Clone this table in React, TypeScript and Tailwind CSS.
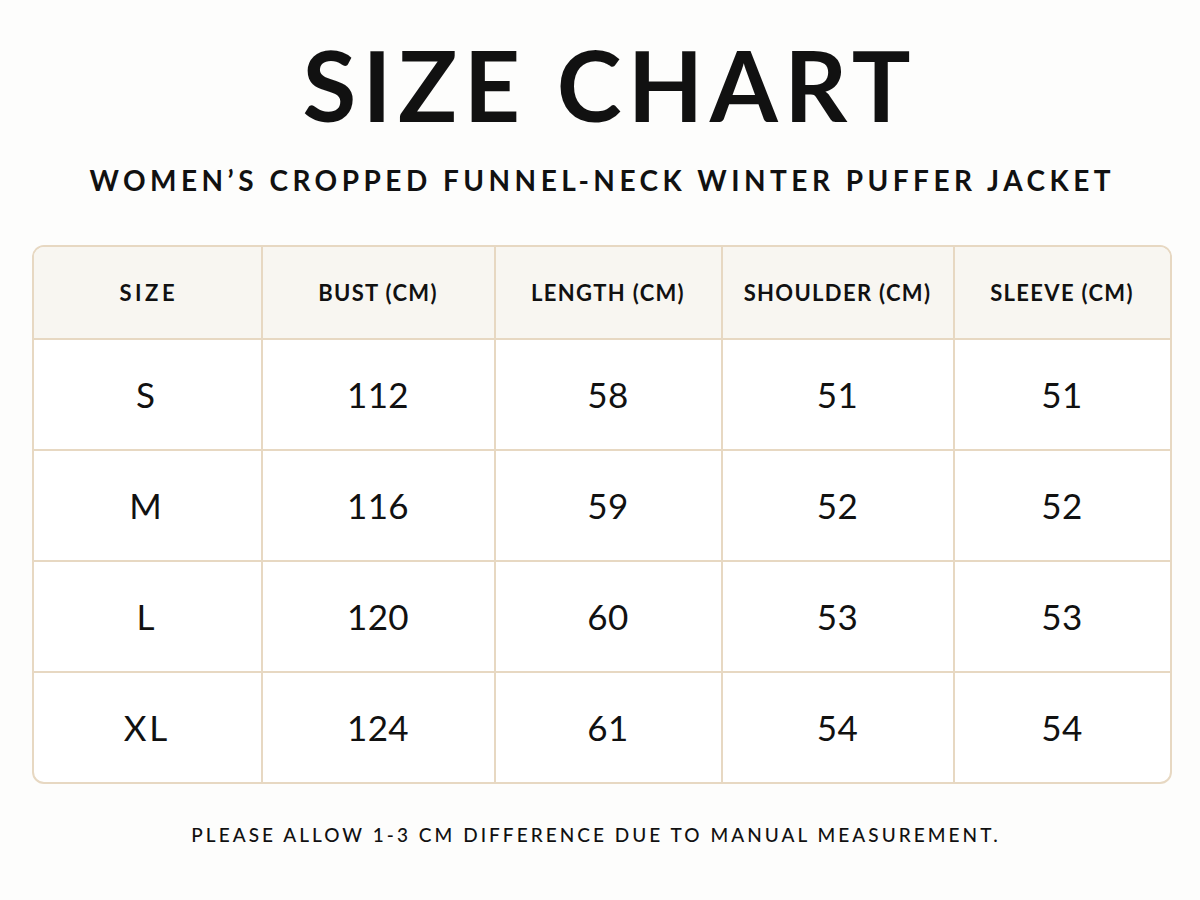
const headers = ["SIZE", "BUST (CM)", "LENGTH (CM)", "SHOULDER (CM)", "SLEEVE (CM)"];

const rows = [
  ["S", "112", "58", "51", "51"],
  ["M", "116", "59", "52", "52"],
  ["L", "120", "60", "53", "53"],
  ["XL", "124", "61", "54", "54"],
];

export default function App() {
  return (
    <div
      className="w-[1200px] h-[900px] bg-[#fdfdfc] text-[#111] flex flex-col items-center"
      style={{ fontFamily: "Lato, 'Noto Sans', sans-serif" }}
    >
      <h1 className="mt-[34px] ml-[13px] text-[98px] leading-[100px] font-bold tracking-[0.065em] pl-[0.065em]">SIZE CHART</h1>
      <h2 className="mt-[29px] text-[28px] leading-[34px] font-bold tracking-[0.16em] pl-[0.16em]">
        WOMEN’S CROPPED FUNNEL-NECK WINTER PUFFER JACKET
      </h2>

      {/* table */}
      <div className="mt-[48px] w-[1140px] ml-[3px] rounded-[12px] border-2 border-[#e7d8c2] overflow-hidden bg-white">
        <div className="grid grid-cols-[227px_233px_227px_232px_1fr] bg-[#f8f6f1]">
          {headers.map((h, i) => (
            <div
              key={h}
              className={`h-[91px] flex items-center justify-center text-[22px] font-bold ${i === 0 ? "tracking-[0.16em] pl-[0.16em]" : "tracking-[0.06em]"} ${i > 0 ? "border-l-2 border-[#e7d8c2]" : ""}`}
            >
              {h}
            </div>
          ))}
        </div>
        {rows.map((r) => (
          <div key={r[0]} className="grid grid-cols-[227px_233px_227px_232px_1fr] border-t-2 border-[#e7d8c2]">
            {r.map((c, i) => (
              <div
                key={i}
                className={`h-[109px] flex items-center justify-center text-[35px] ${i === 0 ? "tracking-[0.08em]" : "tracking-[0.01em]"} ${i > 0 ? "border-l-2 border-[#e7d8c2]" : ""}`}
              >
                {c}
              </div>
            ))}
          </div>
        ))}
      </div>

      <p className="mt-[39px] mr-[8px] text-[19px] leading-[24px] tracking-[0.16em] font-medium">
        PLEASE ALLOW 1-3 CM DIFFERENCE DUE TO MANUAL MEASUREMENT.
      </p>
    </div>
  );
}
